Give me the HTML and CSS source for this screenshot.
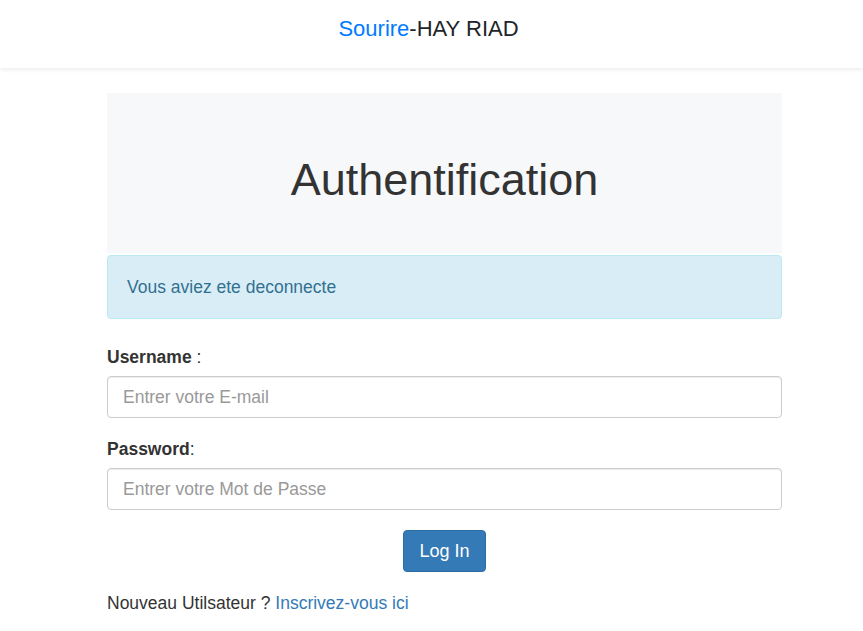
FILE: index.html
```html
<!DOCTYPE html>
<html lang="fr">
<head>
<meta charset="utf-8">
<title>Authentification</title>
<link rel="stylesheet" href="styles.css">
</head>
<body>
<header class="topbar">
  <span class="brand"><span class="brand-accent">Sourire</span>-HAY RIAD</span>
</header>
<main class="page">
  <div class="jumbotron">
    <h1 class="title">Authentification</h1>
  </div>
  <div class="alert">Vous aviez ete deconnecte</div>
  <form class="form">
    <label class="label" for="user"><b>Username</b> :</label>
    <input class="input" id="user" type="text" placeholder="Entrer votre E-mail">
    <label class="label second" for="pass"><b>Password</b>:</label>
    <input class="input" id="pass" type="password" placeholder="Entrer votre Mot de Passe">
    <div class="actions">
      <button class="btn" type="button">Log In</button>
    </div>
    <p class="signup">Nouveau Utilsateur ? <a class="link" href="#">Inscrivez-vous ici</a></p>
  </form>
</main>
</body>
</html>
```
FILE: styles.css
```css
* { box-sizing: border-box; }
html, body { margin: 0; padding: 0; background: #fff; }
body {
  font-family: "Liberation Sans", Arial, Helvetica, sans-serif;
  font-size: 17.5px;
  line-height: 22px;
  color: #333;
}
.topbar {
  height: 68px;
  display: flex;
  align-items: center;
  justify-content: center;
  padding: 0 6px 11px 0;
  background: #fff;
  box-shadow: 0 2px 4px rgba(0, 0, 0, 0.07);
}
.brand {
  font-size: 22px;
  line-height: 26px;
  color: #212529;
}
.brand-accent { color: #007bff; }
.page {
  width: 675px;
  margin: 25px 0 0 107px;
}
.jumbotron {
  background: #f7f8fa;
  padding: 62px 0 48px;
  margin-bottom: 2px;
}
.title {
  margin: 0;
  font-size: 45px;
  line-height: 50px;
  font-weight: 400;
  text-align: center;
  color: #333;
}
.alert {
  background: #d9edf7;
  border: 1px solid #bce8f1;
  border-radius: 4px;
  color: #31708f;
  padding: 19px;
  line-height: 24px;
}
.form {
  display: flex;
  flex-direction: column;
  padding-top: 27px;
}
.label {
  display: block;
  margin-bottom: 8px;
  color: #333;
}
.label b { font-weight: 700; }
.label.second { margin-top: 20px; }
.input {
  display: block;
  width: 100%;
  height: 42px;
  padding: 9px 15px;
  font-family: inherit;
  font-size: 17.5px;
  line-height: 22px;
  color: #555;
  border: 1px solid #ccc;
  border-radius: 4px;
  box-shadow: inset 0 1px 1px rgba(0, 0, 0, 0.075);
  background: #fff;
}
.input::placeholder { color: #999; }
.actions {
  display: flex;
  justify-content: center;
  margin-top: 20px;
}
.btn {
  font-family: inherit;
  font-size: 18px;
  line-height: 22px;
  padding: 9px 15px;
  color: #fff;
  background: #337ab7;
  border: 1px solid #2e6da4;
  border-radius: 4px;
}
.signup {
  margin: 20px 0 0;
  color: #333;
}
.link { color: #337ab7; text-decoration: none; }
```
